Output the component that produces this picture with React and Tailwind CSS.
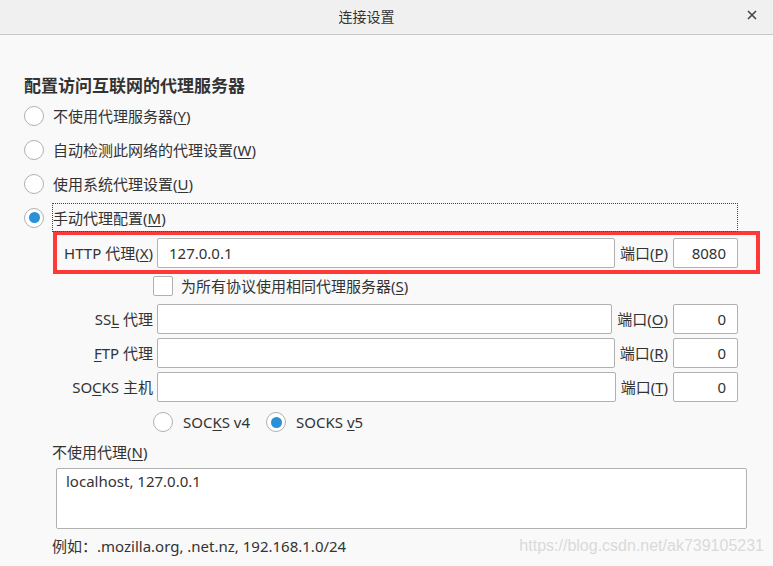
import React from 'react';

/**
 * ConnectionSettings — Firefox-style "连接设置" proxy dialog.
 * The red frame round the HTTP row is an annotation from the screenshot.
 */
const font = "font-['Segoe_UI','Noto_Sans','Noto_Sans_CJK_SC',sans-serif]";

const Key = ({ children }) => <span className="underline underline-offset-2">{children}</span>;

function Radio({ checked = false }) {
  return (
    <span className="w-[20px] h-[20px] shrink-0 rounded-full border border-[#b1b1b1] bg-white flex items-center justify-center">
      {checked && <span className="w-[11px] h-[11px] rounded-full bg-[#2a90d8]" />}
    </span>
  );
}

function TextBox({ value = '', align = 'left', className = '' }) {
  return (
    <div
      className={`h-[30px] border border-[#b1b1b1] rounded-[2px] bg-white flex items-center text-[15px] text-[#333] ${
        align === 'right' ? 'justify-end pr-[11px]' : 'pl-[10px]'
      } ${className}`}
    >
      {value}
    </div>
  );
}

function ProxyRow({ label, value = '', portLabel, port }) {
  return (
    <div className="flex items-center h-[34px]">
      <div className="w-[96px] shrink-0 text-right whitespace-nowrap">{label}</div>
      <TextBox value={value} className="flex-1 ml-[4px] pl-[11px]" />
      <div className="ml-[5px] whitespace-nowrap">{portLabel}</div>
      <TextBox value={port} align="right" className="w-[65px] shrink-0 ml-[5px]" />
    </div>
  );
}

export default function App() {
  const options = [
    <>不使用代理服务器(<Key>Y</Key>)</>,
    <>自动检测此网络的代理设置(<Key>W</Key>)</>,
    <>使用系统代理设置(<Key>U</Key>)</>,
  ];

  return (
    <div className={`w-[773px] h-[566px] overflow-hidden bg-[#f9f9f9] text-[#333] text-[15px] leading-[20px] ${font}`}>
      {/* Title bar */}
      <div className="relative h-[35px] bg-[#f0f0f0] border-b border-[#c9c9c9] flex items-center justify-center pr-[40px]">
        <span className="text-[14px]">连接设置</span>
        <svg className="absolute right-[16px] top-[10px]" width="10" height="10" viewBox="0 0 10 10">
          <path d="M1 1 L9 9 M9 1 L1 9" stroke="#444" strokeWidth="1.6" />
        </svg>
      </div>

      <div className="pl-[24px] pt-[39px]">
        <h2 className="text-[17px] leading-[24px] font-bold">配置访问互联网的代理服务器</h2>

        <div className="mt-[1px]">
          {options.map((label, i) => (
            <div key={i} className="flex items-center h-[34px]">
              <Radio />
              <span className="ml-[9px]">{label}</span>
            </div>
          ))}
          <div className="flex items-center mt-[2px]">
            <Radio checked />
            <div className="ml-[8px] w-[686px] h-[29px] border border-dotted border-[#444] flex items-center">
              手动代理配置(<Key>M</Key>)
            </div>
          </div>
        </div>

        {/* HTTP row, framed in red */}
        <div className="-mt-[1px] ml-[29px] w-[707px] h-[43px] border-4 border-[#ff3838] flex items-center">
          <div className="w-[681px]">
            <ProxyRow
              label={<>HTTP 代理(<Key>X</Key>)</>}
              value="127.0.0.1"
              portLabel={<>端口(<Key>P</Key>)</>}
              port="8080"
            />
          </div>
        </div>

        <div className="ml-[33px] w-[681px]">
          <div className="flex items-center h-[28px] pl-[96px] pb-[4px]">
            <span className="w-[20px] h-[20px] border border-[#b1b1b1] rounded-[2px] bg-white" />
            <span className="ml-[8px]">为所有协议使用相同代理服务器(<Key>S</Key>)</span>
          </div>
          <ProxyRow label={<>SS<Key>L</Key> 代理</>} portLabel={<>端口(<Key>O</Key>)</>} port="0" />
          <ProxyRow label={<><Key>F</Key>TP 代理</>} portLabel={<>端口(<Key>R</Key>)</>} port="0" />
          <ProxyRow label={<>SO<Key>C</Key>KS 主机</>} portLabel={<>端口(<Key>T</Key>)</>} port="0" />
          <div className="flex items-center h-[36px] pl-[96px]">
            <Radio />
            <span className="ml-[10px]">SOC<Key>K</Key>S v4</span>
            <span className="ml-[16px]"><Radio checked /></span>
            <span className="ml-[10px]">SOCKS <Key>v</Key>5</span>
          </div>
        </div>

        <div className="ml-[28px] mt-[2px]">不使用代理(<Key>N</Key>)</div>
        <div className="ml-[32px] mt-[6px] w-[691px] h-[61px] border border-[#b1b1b1] rounded-[2px] bg-white px-[9px] pt-[2px]">
          localhost, 127.0.0.1
        </div>
        <div className="ml-[28px] mt-[7px] flex items-center justify-between pr-[9px]">
          <span>例如：.mozilla.org, .net.nz, 192.168.1.0/24</span>
          <span className="font-['Liberation_Sans',sans-serif] text-[16px] text-[#d9d9d9]">
            https://blog.csdn.net/ak739105231
          </span>
        </div>
      </div>
    </div>
  );
}
